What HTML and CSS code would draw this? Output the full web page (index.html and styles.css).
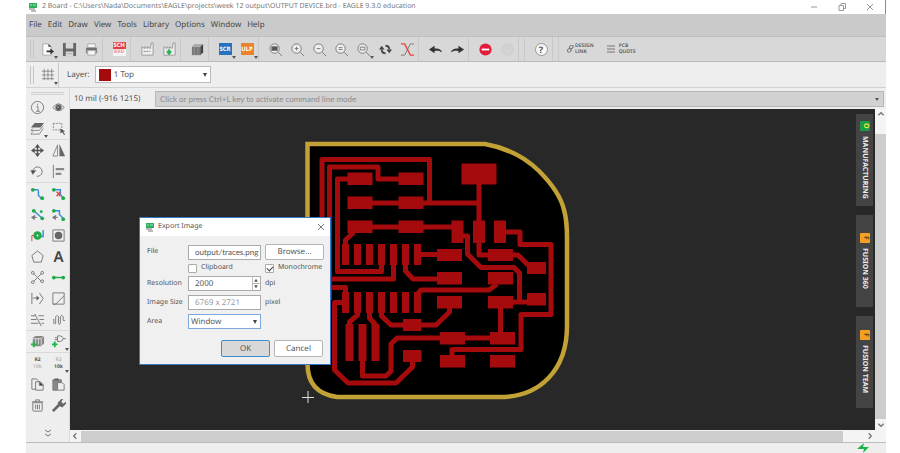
FILE: index.html
```html
<!DOCTYPE html>
<html lang="en">
<head>
<meta charset="utf-8">
<title>2 Board - EAGLE 9.3.0 education</title>
<link rel="stylesheet" href="styles.css">
</head>
<body>
<div class="app">
  <header class="titlebar">
    <svg class="app-icon" viewBox="0 0 10 10"><path d="M1 1h8v5H1z" fill="#2fae60"/><path d="M2 3h2M5 3h3" stroke="#9fe0b8"/><path d="M1 7h6M3 9h5" stroke="#777"/></svg>
    <span class="window-title">2 Board - C:\Users\Nada\Documents\EAGLE\projects\week 12 output\OUTPUT DEVICE.brd - EAGLE 9.3.0 education</span>
    <div class="window-buttons">
      <button aria-label="Minimize"><svg viewBox="0 0 8 8"><path d="M1 4h6"/></svg></button>
      <button aria-label="Restore"><svg viewBox="0 0 8 8"><path d="M1 2.500h4.500v5H1zM3 2.500v-2h4.500v5h-2"/></svg></button>
      <button aria-label="Close"><svg viewBox="0 0 8 8"><path d="M1 1l6 6M7 1l-6 6"/></svg></button>
    </div>
  </header>

  <nav class="menubar">
    <button>File</button><button>Edit</button><button>Draw</button><button>View</button><button>Tools</button><button>Library</button><button>Options</button><button>Window</button><button>Help</button>
  </nav>

  <div class="toolbar">
    <span class="grip"></span>
    <button class="tool drop" aria-label="Open"><svg viewBox="0 0 16 16"><path d="M3 2h6l3 3v9H3z" fill="#fafafa" stroke="#aaa"/><path d="M9 2v3h3z" fill="#333"/><path d="M7 9h4V7l4 3-4 3v-2H7z" fill="#333"/></svg></button>
    <button class="tool" aria-label="Save"><svg viewBox="0 0 16 16"><path d="M1 1h14v14H1z" fill="#666"/><path d="M4 1h8v6H4zM4 10h8v5H4z" fill="#d7d7d7"/><path d="M5 12.500h6" stroke="#aaa"/></svg></button>
    <button class="tool" aria-label="Print"><svg viewBox="0 0 16 16"><path d="M4 2h8v4H4z" fill="#f6f6f6" stroke="#aaa"/><path d="M2 6h12v6H2z" fill="#888"/><path d="M4 9h8v5H4z" fill="#f5f5f5" stroke="#aaa"/><path d="M3 7.500h10" stroke="#555"/></svg></button>
    <span class="separator"></span>
    <button class="tool" aria-label="Switch to schematic"><span class="badge sch">SCH<small>BRD</small></span></button>
    <span class="separator"></span>
    <button class="tool" aria-label="Manufacturing"><svg viewBox="0 0 16 16"><path d="M2 5l3 2 0-2 3 2 0-2 3 2 1-6h2v13H2z" fill="#eee" stroke="#999"/><path d="M4 10h7" stroke="#777" stroke-dasharray="2 1"/></svg></button>
    <button class="tool" aria-label="CAM processor"><svg viewBox="0 0 16 16"><path d="M2 5l3 2 0-2 3 2 0-2 3 2 1-6h2v13H2z" fill="#eee" stroke="#999"/><path d="M6 8h3v2h2l-3.500 4L4 10h2z" fill="#26b256"/></svg></button>
    <span class="separator"></span>
    <button class="tool" aria-label="Library manager"><svg viewBox="0 0 16 16"><path d="M2 5h9v9H2z" fill="#777"/><path d="M2 5l3-3h9l-3 3z" fill="#aaa"/><path d="M11 5l3-3v9l-3 3z" fill="#444"/><path d="M4.500 5v9M8.500 5v9" stroke="#999"/></svg></button>
    <span class="separator"></span>
    <button class="tool drop" aria-label="Run script"><span class="badge scr">SCR</span></button>
    <button class="tool drop" aria-label="Run ULP"><span class="badge ulp">ULP</span></button>
    <span class="separator"></span>
    <button class="tool" aria-label="Zoom to fit"><svg class="line" viewBox="0 0 16 16"><circle cx="7" cy="7" r="5" fill="#eee"/><path d="M11 11l4 4"/><path d="M4 5h6v4H4z" fill="#555"/></svg></button>
    <button class="tool" aria-label="Zoom in"><svg class="line" viewBox="0 0 16 16"><circle cx="7" cy="7" r="5" fill="#eee"/><path d="M11 11l4 4M5 7h4M7 5v4"/></svg></button>
    <button class="tool" aria-label="Zoom out"><svg class="line" viewBox="0 0 16 16"><circle cx="7" cy="7" r="5" fill="#eee"/><path d="M11 11l4 4M5 7h4"/></svg></button>
    <button class="tool" aria-label="Zoom redraw"><svg class="line" viewBox="0 0 16 16"><circle cx="7" cy="7" r="5" fill="#eee"/><path d="M11 11l4 4M5 6h4M5 8h4"/></svg></button>
    <button class="tool drop" aria-label="Zoom select"><svg class="line" viewBox="0 0 16 16"><circle cx="7" cy="7" r="5" fill="#eee"/><path d="M11 11l4 4M4.500 5.500h5v3h-5z"/></svg></button>
    <button class="tool" aria-label="Refresh"><svg viewBox="0 0 16 16"><g fill="none" stroke="#444" stroke-width="2"><path d="M4 8c0 3 2 4 4 4M12 8c0-3-2-4-4-4"/></g><path d="M1 8l3-4 3 4zM9 8h6l-3 4z" fill="#444"/></svg></button>
    <button class="tool" aria-label="Ratsnest"><svg viewBox="0 0 16 16" fill="none"><path d="M1 14h4L11 2h4" stroke="#777"/><path d="M1 2h4l6 12h4" stroke="#f04040" stroke-width="1.500"/></svg></button>
    <span class="separator"></span>
    <button class="tool" aria-label="Undo"><svg viewBox="0 0 16 16"><path d="M1 8l6-4v3c4-.5 7 .5 8 4-3-2-5-2-8-1.500V12z" fill="#333"/></svg></button>
    <button class="tool" aria-label="Redo"><svg viewBox="0 0 16 16"><path d="M15 8L9 4v3c-4-.5-7 .5-8 4 3-2 5-2 8-1.500V12z" fill="#333"/></svg></button>
    <span class="separator"></span>
    <button class="tool" aria-label="Stop"><svg viewBox="0 0 16 16"><circle cx="8" cy="8" r="6.500" fill="#e21c3a"/><path d="M4 8h8" stroke="#fff" stroke-width="2"/></svg></button>
    <button class="tool" aria-label="Go"><svg viewBox="0 0 16 16"><circle cx="8" cy="8" r="6" fill="#d2d2d2" stroke="#cacaca"/></svg></button>
    <span class="separator"></span><span class="separator"></span>
    <button class="tool" aria-label="Help"><span class="help">?</span></button>
    <span class="separator"></span><span class="separator"></span>
    <button class="service"><svg viewBox="0 0 8 8"><g fill="none" stroke="#777"><rect x="1" y="4" width="4" height="3" rx="1.500" transform="rotate(-45 3 5)"/><rect x="4" y="1" width="4" height="3" rx="1.500" transform="rotate(-45 5 3)"/></g></svg><span>DESIGN<br>LINK</span></button>
    <button class="service quote"><svg viewBox="0 0 8 8"><path d="M0 1h8M0 4h8M0 7h8" stroke="#777"/></svg><span>PCB<br>QUOTE</span></button>
  </div>

  <div class="parameters">
    <span class="grip"></span>
    <button class="tool drop" aria-label="Grid"><svg viewBox="0 0 16 16" stroke="#777" stroke-width=".8"><path d="M4.500 2v12M8.500 2v12M12.500 2v12M2 4.500h13M2 8.500h13M2 12.500h13"/></svg></button>
    <span class="separator"></span>
    <label for="layer">Layer:</label>
    <div class="layer-picker"><span class="swatch"></span><select id="layer"><option>1 Top</option></select></div>
  </div>

  <div class="workspace">
    <aside class="palette">
      <div class="palette-grip"></div>
      <div class="tools">
        <button aria-label="Info"><svg class="line" viewBox="0 0 16 16"><circle cx="8" cy="8" r="6.500"/><path d="M7 7h1.500v5M6.500 12h4M8 4v1.500"/></svg></button>
        <button aria-label="Show"><svg class="line" viewBox="0 0 16 16"><path d="M2 8q6-8 12 0q-6 7-12 0z"/><circle cx="8" cy="8" r="3" fill="#555"/><circle cx="7.500" cy="7.500" r=".7" fill="#fff" stroke="none"/></svg></button>
        <button class="drop" aria-label="Layers"><svg viewBox="0 0 16 16"><path d="M5 2h10l-4 5H1z" fill="#666"/><path d="M3 8l-2 2h9l4-5M3 11l-2 3h9l4-6" fill="none" stroke="#888"/></svg></button>
        <button aria-label="Group"><svg viewBox="0 0 16 16"><path d="M2.500 2.500h9v7h-9z" fill="none" stroke="#888" stroke-dasharray="2 1"/><path d="M10 8l5 3-2 .5 2 3-1 .5-2-3-2 1z" fill="#555"/></svg></button>
      </div>
      <div class="tools">
        <button aria-label="Move"><svg viewBox="0 0 16 16"><path d="M8 3v10M3 8h10" stroke="#555" stroke-width="1.500"/><path d="M8 1l3 4H5zM8 15l3-4H5zM1 8l4-3v6zM15 8l-4-3v6z" fill="#555"/></svg></button>
        <button aria-label="Mirror"><svg viewBox="0 0 16 16"><path d="M7 2v12H2z" fill="none" stroke="#888"/><path d="M9 1v13h6z" fill="#666"/></svg></button>
        <button aria-label="Rotate"><svg class="line" viewBox="0 0 16 16"><path d="M3 8a5 5 0 1 1 4 5"/><path d="M1 7h5L3 11z" fill="#444"/></svg></button>
        <button aria-label="Align"><svg viewBox="0 0 16 16"><path d="M2.500 1v14" stroke="#777"/><path d="M5 5.500h9M5 10.500h6" stroke="#888" stroke-width="2.500"/></svg></button>
      </div>
      <div class="tools">
        <button aria-label="Route"><svg class="route" viewBox="0 0 16 16"><path d="M3 4h5q1 0 1 2v4l3 3"/><circle cx="3" cy="4" r="2"/><circle cx="13" cy="13" r="2"/></svg></button>
        <button aria-label="Ripup"><svg class="route" viewBox="0 0 16 16"><path d="M3 4h7v5l3 4"/><circle cx="3" cy="4" r="2"/><circle cx="13" cy="13" r="2"/><path class="red" d="M6 6l4 5M10 6l-4 5"/></svg></button>
        <button aria-label="Quick route"><svg class="route" viewBox="0 0 16 16"><path d="M4 4l9 8"/><circle cx="4" cy="4" r="2"/><circle cx="13" cy="12" r="2"/><circle cx="12" cy="5" r="1.500"/><path class="gray" d="M1 11l5-3-1 2 3 1-3 1v2z"/></svg></button>
        <button aria-label="Smart route"><svg class="route" viewBox="0 0 16 16"><path d="M3 4h6v4l4 4"/><circle cx="3" cy="4" r="2"/><circle cx="13" cy="13" r="2"/><path class="gray" d="M1 11l5-3-1 2 3 1-3 1v2z"/></svg></button>
        <button aria-label="Via"><svg viewBox="0 0 16 16"><path d="M2 14V8h6" fill="none" stroke="#d04343"/><path d="M14 2v7H8" fill="none" stroke="#3b8ddd" stroke-width="1.500"/><circle cx="8" cy="8" r="4.500" fill="#20a94a"/><circle cx="8" cy="8" r="1" fill="#fff"/></svg></button>
        <button aria-label="Hole"><svg viewBox="0 0 16 16"><path d="M2 2h12v12H2z" fill="none" stroke="#777"/><circle cx="8" cy="8" r="4" fill="#666"/></svg></button>
        <button aria-label="Polygon"><svg class="line" viewBox="0 0 16 16"><path d="M8 2l6 5-2 7H4L2 7z"/></svg></button>
        <button class="letter" aria-label="Text">A</button>
        <button aria-label="Split"><svg class="line" viewBox="0 0 16 16"><path d="M4 4l4 4 4-4M4 12l4-4 4 4"/><circle cx="3" cy="3" r="1.500"/><circle cx="13" cy="3" r="1.500"/><circle cx="3" cy="13" r="1.500"/><circle cx="13" cy="12" r="1.500"/></svg></button>
        <button aria-label="Signal"><svg viewBox="0 0 16 16"><path d="M3 8h10" stroke="#20a94a" stroke-width="1.500"/><circle cx="3" cy="8" r="2" fill="#20a94a"/><circle cx="13" cy="8" r="2" fill="#20a94a"/></svg></button>
        <button aria-label="Fanout"><svg class="line" viewBox="0 0 16 16"><path d="M2 2v12M10 2l4 6-4 6M3 7.500h5"/><path d="M7 5l3 2.500L7 10z" fill="#555" stroke="none"/></svg></button>
        <button aria-label="Miter"><svg class="line" viewBox="0 0 16 16"><path d="M14 2H2v12h3L14 5V2M2 14h12V5"/></svg></button>
        <button aria-label="Optimize"><svg class="line" viewBox="0 0 16 16"><path d="M1 4h5M9 4h6M1 8h6M10 8h5M1 12h8M12 12h3M5 2l7 13"/></svg></button>
        <button aria-label="Meander"><svg class="line" viewBox="0 0 16 16"><path d="M2 8h1v4q1 2 2 0V5q1.500-3 3 0v7q1 3 2 0V5q1-3 3 0v4h2"/></svg></button>
      </div>
      <div class="tools">
        <button aria-label="Add package"><svg viewBox="0 0 16 16"><path d="M3 4l3-2h9v8l-3 3H3z" fill="#888"/><path d="M3 5h9v8M12 5l3-3M6 5v6M9 5v6" stroke="#ddd" fill="none"/><path d="M1 11h6M4 8v6" stroke="#20b84a" stroke-width="2"/></svg></button>
        <button class="drop" aria-label="Add part"><svg viewBox="0 0 16 16"><path d="M7 2h3q3 1 3 3t-3 3H7zM4 4h3M4 6h3M13 5h3" fill="none" stroke="#777"/><path d="M1 11h6M4 8v6" stroke="#20b84a" stroke-width="2"/></svg></button>
      </div>
      <div class="tools">
        <button class="value">R2<span>10k</span></button>
        <button class="value alt drop">R2<span>10k</span></button>
        <button aria-label="Copy"><svg class="line" viewBox="0 0 16 16"><path d="M6 13H2V2h5l2 2M6 5h5l3 3v6H6z"/><path d="M10 5l4 4h-4z" fill="#333"/></svg></button>
        <button aria-label="Paste"><svg class="line" viewBox="0 0 16 16"><path d="M2 3h9v3H7v8H2z" fill="#888"/><path d="M7 6h5l2 2v6H7z" fill="#eee"/><path d="M4 2h4v2H4z" fill="#555"/></svg></button>
        <button aria-label="Delete"><svg class="line" viewBox="0 0 16 16"><path d="M3 5h10v8q0 1-1 1H4q-1 0-1-1zM2 4h12M6 4V2h4v2M6 7v5M8 7v5M10 7v5"/></svg></button>
        <button aria-label="Change"><svg viewBox="0 0 16 16"><path d="M2 14L9 7" stroke="#666" stroke-width="3"/><path d="M8 8l-1-3 4-4 2 0-2 3 2 2 3-2 0 2-4 4z" fill="#666"/></svg></button>
      </div>
      <button class="more" aria-label="More tools"><svg class="line" viewBox="0 0 8 8"><path d="M1 1l3 2 3-2M1 5l3 2 3-2"/></svg></button>
    </aside>

    <main class="editor">
      <div class="command-row">
        <span class="coordinates">10 mil (-916 1215)</span>
        <div class="command"><input aria-label="Command line" placeholder="Click or press Ctrl+L key to activate command line mode"><svg viewBox="0 0 6 6"><path d="M1 2h4L3 5z" fill="#555"/></svg></div>
      </div>
      <div class="drawing">
        <div class="canvas">
          <svg class="board" viewBox="70 109 805 321" preserveAspectRatio="xMinYMin meet">
            <path d="M307.500 144H485Q518 150 539 171T564 210Q567 220 567 238V326C567 370 540 397 500 397H337Q307.500 393 307.500 364Z" fill="#000" stroke="#c2a136" stroke-width="4.500"/>
            <g fill="none" stroke="#a50b0c" stroke-width="5" stroke-linejoin="round">
              <path d="M322 300V159.500H429.500V203M329.500 300V167H378V179H400M350 179H337.500V271.500H381.500V264"/>
              <path d="M370 203H479M370 227H452M354 232L345.500 240V246M479 184V255H490M420 254.500H438"/>
              <path d="M393.500 264V279H325M405.500 264V271L413 279H438M325 287.500H345.500V293M343 302.500H334.500V370L348 383H396L412.500 367V361"/>
              <path d="M357.500 312V315L349.500 322V326M369.500 312V318L375 324V326M381.500 312V316L391 325H436L449.500 312V307"/>
              <path d="M417.500 294L421 290H489L497 284M362.500 360V376H386L391 371V344L397 338H492M500.500 307V333"/>
              <path d="M505 232H520V244.500H551V314.500H521V349.500H452V357"/>
              <path d="M462 236H467.500V254L481 267.500H514L519.500 273V302M512 255H518L532 269M512 302H529"/>
            </g>
            <g fill="#a50b0c">
              <path d="M347.500 172.500h25v12.500h-25zm51 0h25v12.500h-25zm-51 24h25v12.500h-25zm51 0h25v12.500h-25zm-51 24h25v12.500h-25zm51 0h25v12.500h-25z"/>
              <path d="M461.500 163.500h35v21h-35zM451.500 220.500h12v22.500h-12zM473 220.500h12v22.500h-12zM494 220.500h12v22.500h-12z"/>
              <path d="M342 244h7v21h-7zm12 0h7v21h-7zm12 0h7v21h-7zm12 0h7v21h-7zm12 0h7v21h-7zm12 0h7v21h-7zm12 0h7v21h-7z"/>
              <path d="M342 292h7v21h-7zm12 0h7v21h-7zm12 0h7v21h-7zm12 0h7v21h-7zm12 0h7v21h-7zm12 0h7v21h-7zm12 0h7v21h-7z"/>
              <path d="M345.500 324h8v37h-8zm13 0h8v37h-8zm13 0h8v37h-8zM403 319h18.500v12H403zM403 350h18.500v12H403z"/>
              <path d="M437 249h25v12h-25zm51 0h25v12h-25zM437 272h25v12.500h-25zm51 0h25v12.500h-25zM437 296h25v12.500h-25zm51 0h25v12.500h-25zM440 332h25v12.500h-25zm50 0h25v12.500h-25zM440 355h25v12.500h-25zm50 0h25v12.500h-25zM527 262h19v12h-19zM527 293h19v12.500h-19z"/>
            </g>
            <path d="M302 397.500h12M308 391v12" stroke="#ddd" fill="none"/>
          </svg>

          <div class="side-tabs">
            <button><i class="green">O</i>MANUFACTURING</button>
            <button><i>F</i>FUSION 360</button>
            <button><i>F</i>FUSION TEAM</button>
          </div>

          <form class="dialog" role="dialog" aria-labelledby="dialog-title">
            <div class="dialog-title">
              <svg class="app-icon" viewBox="0 0 10 10"><path d="M1 1h8v5H1z" fill="#2fae60"/><path d="M2 3h2M5 3h3" stroke="#9fe0b8"/><path d="M1 7h6M3 9h5" stroke="#777"/></svg>
              <span id="dialog-title">Export Image</span>
              <button type="button" class="close" aria-label="Close"><svg class="line" viewBox="0 0 8 8"><path d="M1 1l6 6M7 1l-6 6"/></svg></button>
            </div>
            <div class="fields">
              <label for="file">File</label>
              <input id="file" class="field file" value="output/traces.png">
              <button type="button" class="btn">Browse...</button>

              <label class="check second"><input type="checkbox">Clipboard</label>
              <label class="check"><input type="checkbox" checked>Monochrome</label>

              <label for="resolution">Resolution</label>
              <div class="field spinner"><input id="resolution" value="2000"><svg viewBox="0 0 8 14"><path d="M0 0v14M0 7h8" stroke="#aaa"/><path d="M2 5h4L4 2zM2 9h4L4 12z" fill="#555"/></svg></div>
              <span>dpi</span>

              <label for="size">Image Size</label>
              <input id="size" class="field muted" value="6769 x 2721" readonly>
              <span>pixel</span>

              <label for="area">Area</label>
              <select id="area" class="field area"><option>Window</option></select>
            </div>
            <div class="actions">
              <button type="button" class="btn primary">OK</button>
              <button type="button" class="btn">Cancel</button>
            </div>
          </form>
        </div>
        <div class="scroll vertical">
          <svg class="line" viewBox="0 0 6 6"><path d="M1 4l2-2 2 2"/></svg><span class="thumb"></span><svg class="line" viewBox="0 0 6 6"><path d="M1 2l2 2 2-2"/></svg>
        </div>
      </div>
      <div class="scroll horizontal">
        <svg class="line" viewBox="0 0 6 6"><path d="M4 1L2 3l2 2"/></svg><span class="thumb"></span><svg class="line" viewBox="0 0 6 6"><path d="M2 1l2 2-2 2"/></svg>
      </div>
    </main>
  </div>
  <footer class="status"><svg viewBox="0 0 12 10"><path d="M0 6l7-6-1 4h6L6 10l1-4z" fill="#1fb24a"/></svg></footer>
</div>
</body>
</html>
```

FILE: styles.css
```css
* { box-sizing: border-box; }
html, body { height: 100%; }
body {
  margin: 0;
  overflow: hidden;
  background: #fff;
  color: #555;
  font: 8px/12px "Noto Sans", "Open Sans", sans-serif;
  text-rendering: geometricPrecision;
}
button, input, select { font: inherit; color: inherit; margin: 0; padding: 0; border: 0; border-radius: 0; background: none; text-rendering: inherit; }
select { appearance: none; }
svg { display: block; flex: none; }
.line { fill: none; stroke: #777; }

.app { height: 100%; margin: 0 14px 0 26px; display: flex; flex-direction: column; background: #eee; }
.app-icon { width: 10px; height: 10px; }

.titlebar { height: 14px; flex: none; display: flex; align-items: center; gap: 4px; padding-left: 2px; background: #fff; border-right: 1px solid #0e1; color: #777; font-size: 7px; white-space: nowrap; }
.window-buttons { margin-left: auto; display: flex; gap: 20px; padding-right: 11px; }
.window-buttons svg { width: 8px; height: 8px; fill: none; stroke: #999; }

.menubar { height: 23px; flex: none; display: flex; align-items: center; gap: 6px; padding-left: 3px; background: #cacaca; border-bottom: 1px solid #bebebe; color: #444; }

.toolbar { height: 25px; flex: none; display: flex; align-items: center; background: #d8d8d8; border-bottom: 1px solid #b9b9b9; }
.grip { width: 4px; height: 18px; margin: 0 2px 0 4px; border: solid #c6c6c6; border-width: 0 1px; }
.tool { width: 22px; height: 22px; display: grid; place-items: center; flex: none; }
.tool svg { width: 15px; height: 15px; }
.drop { position: relative; }
.drop::after { content: ""; position: absolute; right: 0; bottom: 1px; border: 2px solid transparent; border-top: 3px solid #555; border-bottom: 0; }
.separator { width: 6px; height: 24px; flex: none; border-left: 1px solid #c8c8c8; }
.badge { width: 13px; height: 12px; color: #fff; font-size: 6px; font-weight: 700; line-height: 12px; text-align: center; }
.scr { background: #2672bd; }
.ulp { background: #eb822c; }
.sch { height: 14px; background: #df4044; line-height: 7px; }
.badge small { display: block; background: #f4f4f4; color: #e99; font-size: 5px; }
.help { width: 13px; height: 13px; border: 1px solid #999; border-radius: 50%; background: #f7f7f7; font-size: 9px; font-weight: 700; line-height: 11px; }
.service { display: flex; align-items: center; gap: 1px; margin-left: 2px; font-size: 5px; font-weight: 600; line-height: 6px; text-align: left; }
.service svg { width: 8px; height: 8px; }
.quote { gap: 4px; margin-left: 13px; }

.parameters { height: 26px; flex: none; display: flex; align-items: center; border-bottom: 1px solid #d2d2d2; }
.parameters label { margin: 0 5px 0 3px; }
.layer-picker { width: 116px; height: 17px; display: flex; align-items: center; gap: 3px; padding: 0 3px; background: #fff; border: 1px solid #bbb; }
.swatch { width: 12px; height: 12px; background: #a50b0c; }
.layer-picker select, .field.area { background: url("data:image/svg+xml,%3Csvg xmlns='http://www.w3.org/2000/svg' width='4' height='4'%3E%3Cpath d='M0 0h4L2 4z' fill='%23444'/%3E%3C/svg%3E") no-repeat right center; }
.layer-picker select { flex: 1; }

.workspace { flex: 1; min-height: 0; display: flex; }
.palette { width: 44px; flex: none; border-right: 1px solid #d9d9d9; }
.palette-grip { height: 3px; margin: 4px 5px 2px; border: solid #d0d0d0; border-width: 1px 0; }
.tools { display: grid; grid-template-columns: 21px 21px; padding-left: 1px; border-bottom: 1px solid #d9d9d9; }
.tools:nth-of-type(6) { border: 0; }
.tools button { height: 21px; display: grid; place-items: center; }
.tools svg { width: 15px; height: 15px; }
.tools .letter { font-size: 15px; font-weight: 600; color: #444; }
.tools .value { align-content: center; font-size: 5px; font-weight: 700; line-height: 7px; }
.value span, .tools .alt { color: #bbb; }
.alt span { color: #555; }
.route { fill: none; stroke: #368bdc; stroke-width: 1.5; }
.route circle { fill: #20a94a; stroke: none; }
.route .red { stroke: #ed3f43; }
.route .gray { fill: #777; stroke: none; }
.more { width: 100%; height: 21px; margin-top: 6px; display: grid; place-items: center; }
.more svg { width: 8px; height: 8px; }

.editor { flex: 1; min-width: 0; display: flex; flex-direction: column; }
.command-row { height: 21px; flex: none; display: flex; align-items: center; padding: 0 2px 0 4px; }
.coordinates { width: 81px; white-space: nowrap; }
.command { flex: 1; height: 16px; display: flex; align-items: center; padding: 0 3px 0 4px; background: #d1d1d1; border: 1px solid #b8b8b8; font-family: Lato, sans-serif; }
.command input { flex: 1; }
.command input::placeholder { color: #8c8c8c; opacity: 1; }
.command svg { width: 6px; height: 6px; }
.drawing { flex: 1; min-height: 0; display: flex; }
.canvas { flex: 1; position: relative; background: #282828; }
.board { width: 100%; height: 100%; }

.side-tabs { position: absolute; top: 5px; right: 2px; display: flex; flex-direction: column; gap: 9px; }
.side-tabs button { width: 17px; height: 92px; display: flex; align-items: center; justify-content: center; gap: 5px; writing-mode: vertical-rl; background: #444; color: #eee; font-size: 7px; font-weight: 700; line-height: 17px; }
.side-tabs i { width: 10px; height: 10px; border-radius: 1px; background: #f5a024; color: #60400c; font-style: normal; line-height: 10px; text-align: center; }
.side-tabs .green { background: #1b9b45; color: #e9ee38; }

.scroll { display: flex; align-items: center; background: #f4f4f4; }
.scroll svg { width: 8px; height: 8px; }
.scroll .thumb { flex: 1; background: #cdcdcd; }
.vertical { width: 11px; flex-direction: column; padding: 1px 0; }
.vertical .thumb { width: 11px; margin: 16px 0 2px; }
.horizontal { height: 12px; flex: none; padding: 0 12px 0 1px; }
.horizontal .thumb { height: 11px; margin: 0 23px 0 2px; }
.status { height: 11px; flex: none; display: flex; justify-content: flex-end; align-items: center; padding-right: 17px; border-top: 1px solid #bbb; }
.status svg { width: 12px; height: 10px; }

.dialog { position: absolute; left: 69px; top: 108px; width: 192px; background: #f0f0f0; border: 1px solid #3676c7; font-size: 7px; }
.dialog-title { height: 18px; display: flex; align-items: center; gap: 3px; padding: 0 5px; background: #fff; }
.close { margin-left: auto; }
.close svg { width: 8px; height: 8px; }
.fields { display: grid; grid-template-columns: 37px 73px 59px; grid-template-rows: 16px 8px 15px 15px 15px; gap: 4px; align-items: center; padding: 8px 7px 0; white-space: nowrap; }
.field { width: 73px; height: 15px; padding: 0 6px; background: #fff; border: 1px solid #aaa; font-size: 8px; }
.field.file { padding: 0 1px 0 6px; font-family: Lato, sans-serif; }
.field.muted { color: #999; }
.field.spinner { display: flex; padding-right: 0; }
.spinner input { flex: 1; width: 0; }
.spinner svg { width: 8px; height: 13px; }
.field.area { padding: 0 2px; border-color: #7ba9dc; background-color: #fff; background-position: right 3px center; }
.check { display: flex; align-items: center; gap: 4px; }
.second { grid-column: 2; }
.check input { width: 9px; height: 9px; flex: none; appearance: none; border: 1px solid #aaa; border-radius: 1px; background: #fff; }
.check input:checked::after { content: ""; display: block; width: 3px; height: 5px; margin-left: 2px; border: solid #444; border-width: 0 1px 1px 0; transform: rotate(45deg); }
.btn { height: 16px; background: #fff; border: 1px solid #b5b5b5; border-radius: 2px; font-size: 8px; }
.actions { display: flex; justify-content: flex-end; gap: 4px; padding: 11px 7px 7px; }
.actions .btn { width: 49px; height: 17px; }
.actions .primary { background: #d8d8d8; border-color: #3990d5; }
```
